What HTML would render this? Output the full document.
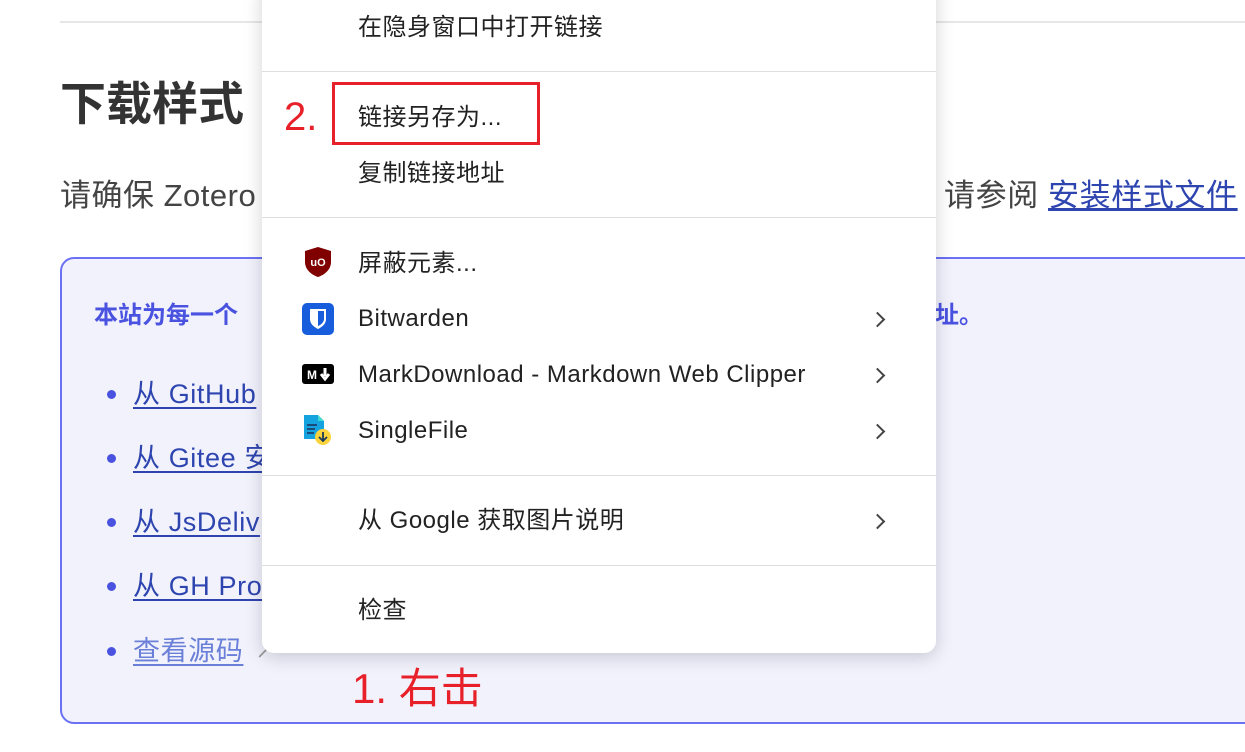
<!DOCTYPE html>
<html><head><meta charset="utf-8"><style>
body{margin:0;width:1245px;height:752px;overflow:hidden;background:#fff;position:relative;font-family:"Liberation Sans","Noto Sans CJK SC",sans-serif;}
.a{position:absolute;white-space:nowrap;}
.box{position:absolute;left:60px;top:257px;width:1220px;height:463px;border:2px solid #6b70f5;border-radius:14px;background:#f2f2fd;}
.li{position:absolute;left:133px;font-size:27px;letter-spacing:0.6px;color:#2e45b0;text-decoration:underline;text-underline-offset:4px;line-height:30px;}
.dot{position:absolute;left:107px;width:9px;height:9px;border-radius:50%;background:#4a52e0;}
.menu{position:absolute;left:262px;top:-20px;width:674px;height:673px;background:#fff;border-radius:12px;box-shadow:0 4px 18px rgba(0,0,0,.18);}
.mi{position:absolute;left:96px;font-size:24px;letter-spacing:0.5px;color:#222;line-height:28px;}
.sep{position:absolute;left:0;width:674px;height:1px;background:#dedede;}
.chev{position:absolute;left:610px;width:9px;height:9px;border-right:2px solid #444;border-top:2px solid #444;transform:rotate(45deg);}
</style></head><body>
<div class="a" style="left:60px;top:21px;width:1185px;height:2px;background:#e6e6e6"></div>
<div class="a" style="left:60px;top:76px;font-size:46px;font-weight:bold;color:#333;line-height:56px">下载样式</div>
<div class="a" style="left:60px;top:178px;font-size:31px;letter-spacing:0.5px;color:#444;line-height:36px">请确保 Zotero</div>
<div class="a" style="left:944px;top:178px;font-size:31px;letter-spacing:0.6px;color:#444;line-height:36px">请参阅 <span style="color:#2e45b0;text-decoration:underline">安装样式文件</span></div>
<div class="box"></div>
<div class="a" style="left:94px;top:300px;font-size:24px;font-weight:bold;color:#4a52e0;line-height:32px">本站为每一个</div>
<div class="a" style="left:935px;top:300px;font-size:24px;font-weight:bold;color:#4a52e0;line-height:32px">址。</div>
<div class="dot" style="top:390px"></div><div class="li a" style="top:379px">从 GitHub</div>
<div class="dot" style="top:454px"></div><div class="li a" style="top:443px">从 Gitee 安</div>
<div class="dot" style="top:518px"></div><div class="li a" style="top:507px">从 JsDeliv</div>
<div class="dot" style="top:582px"></div><div class="li a" style="top:571px">从 GH Pro</div>
<div class="dot" style="top:647px"></div><div class="li a" style="top:636px;color:#6a80d8">查看源码</div>
<div class="a" style="left:255px;top:636px;font-size:24px;color:#999;line-height:30px">↗</div>
<div class="menu">
<div class="mi" style="top:34px">在隐身窗口中打开链接</div>
<div class="sep" style="top:91px"></div>
<div class="mi" style="top:124px">链接另存为...</div>
<div class="mi" style="top:180px">复制链接地址</div>
<div class="sep" style="top:237px"></div>
<svg class="a" style="left:41px;top:266px" width="30" height="32" viewBox="0 0 30 32"><path d="M15 1 L28 5 V16 C28 24 21 29 15 31 C9 29 2 24 2 16 V5 Z" fill="#800000"/><text x="15" y="20" font-size="11" font-weight="bold" fill="#fff" text-anchor="middle" font-family="Liberation Sans">uO</text></svg>
<div class="mi" style="top:270px">屏蔽元素...</div>
<svg class="a" style="left:40px;top:323px" width="32" height="32" viewBox="0 0 32 32"><rect width="32" height="32" rx="5" fill="#175ddc"/><path d="M8 6 H24 V16 C24 21 20 24 16 26 C12 24 8 21 8 16 Z" fill="#fff"/><path d="M16 8 H22 V16 C22 19 19 22 16 23 Z" fill="#175ddc"/></svg>
<div class="mi" style="top:325px">Bitwarden</div><div class="chev" style="top:334px"></div>
<svg class="a" style="left:40px;top:384px" width="32" height="20" viewBox="0 0 32 20"><rect width="32" height="20" rx="3" fill="#000"/><text x="10" y="15" font-size="12" font-weight="bold" fill="#fff" text-anchor="middle" font-family="Liberation Sans">M</text><path d="M23 4 V12 M19 10 L23 15 L27 10" stroke="#fff" stroke-width="3" fill="none"/></svg>
<div class="mi" style="top:381px">MarkDownload - Markdown Web Clipper</div><div class="chev" style="top:390px"></div>
<svg class="a" style="left:40px;top:433px" width="32" height="34" viewBox="0 0 32 34"><path d="M2 2 H16 L22 8 V26 H2 Z" fill="#15a3e0"/><path d="M16 2 L22 8 H16Z" fill="#3dd8d0"/><path d="M5 12 H15 M5 16 H13 M5 20 H12" stroke="#1a4b7a" stroke-width="2"/><circle cx="21" cy="24" r="8" fill="#fbd33c"/><path d="M21 19 V28 M17 24 L21 28 L25 24" stroke="#1a3a5a" stroke-width="1.8" fill="none"/></svg>
<div class="mi" style="top:437px">SingleFile</div><div class="chev" style="top:446px"></div>
<div class="sep" style="top:495px"></div>
<div class="mi" style="top:527px">从 Google 获取图片说明</div><div class="chev" style="top:536px"></div>
<div class="sep" style="top:585px"></div>
<div class="mi" style="top:617px">检查</div>
</div>
<div class="a" style="left:332px;top:82px;width:202px;height:57px;border:3px solid #e8202a;"></div>
<div class="a" style="left:284px;top:94px;font-size:40px;color:#e8202a;line-height:46px">2.</div>
<div class="a" style="left:352px;top:664px;font-size:42px;color:#e8202a;line-height:50px">1. 右击</div>
</body></html>
